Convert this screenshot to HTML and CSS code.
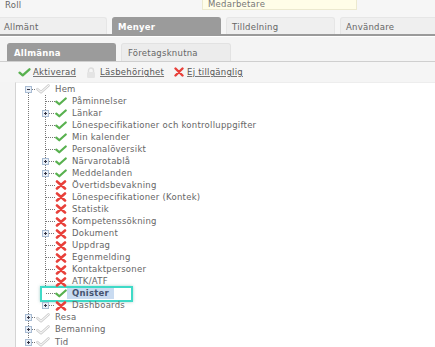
FILE: index.html
```html
<!DOCTYPE html>
<html lang="sv">
<head>
<meta charset="utf-8">
<link rel="stylesheet" href="styles.css">
</head>
<body>
<div class="page">
  <div class="top">
    <span class="lbl">Roll</span>
    <div class="field">Medarbetare</div>
  </div>
  <div class="tabs">
    <div class="tab">Allmänt</div>
    <div class="tab active">Menyer</div>
    <div class="tab">Tilldelning</div>
    <div class="tab">Användare</div>
  </div>
  <div class="panel">
    <div class="subtabs">
      <div class="subtab active">Allmänna</div>
      <div class="subtab">Företagsknutna</div>
    </div>
    <div class="legend">
      <span class="li"><svg class="ic" viewBox="0 0 14 10"><path d="M1.5 5.2 L5 8.2 L12.5 1.5" fill="none" stroke="#58b14f" stroke-width="2.6" stroke-linecap="round" stroke-linejoin="round"/></svg><u>Aktiverad</u></span>
      <span class="li"><svg class="lock" viewBox="0 0 10 11"><path d="M2.5 5 V3.5 a2.5 2.5 0 0 1 5 0 V5" fill="none" stroke="#ddd" stroke-width="1.4"/><rect x="1" y="5" width="8" height="6" rx="1" fill="#e4e4e4"/></svg><u>Läsbehörighet</u></span>
      <span class="li"><svg class="x" viewBox="0 0 10 10"><path d="M1.5 1.5 L8.5 8.5 M8.5 1.5 L1.5 8.5" stroke="#e8403a" stroke-width="2.4" stroke-linecap="round"/></svg><u>Ej tillgänglig</u></span>
    </div>
    <div class="tree">
      <div class="root">
        <div class="row l0"><span class="exp minus"></span><span class="conn0"></span><svg class="gc" viewBox="0 0 14 10"><path d="M1.5 5.2 L5 8.2 L12.5 1.5" fill="none" stroke="#cfcfcf" stroke-width="2.6" stroke-linecap="round" stroke-linejoin="round"/><path d="M1.5 5.2 L5 8.2 L12.5 1.5" fill="none" stroke="#fff" stroke-width="1" stroke-linecap="round" stroke-linejoin="round"/></svg><span class="t">Hem</span></div>
        <div class="kids">
          <div class="row l1"><span class="leaf"></span><svg class="ok" viewBox="0 0 14 10"><path d="M1.5 5.2 L5 8.2 L12.5 1.5" fill="none" stroke="#58b14f" stroke-width="2.6" stroke-linecap="round" stroke-linejoin="round"/></svg><span class="t">Påminnelser</span></div>
          <div class="row l1"><span class="exp plus"></span><span class="conn1"></span><svg class="ok" viewBox="0 0 14 10"><path d="M1.5 5.2 L5 8.2 L12.5 1.5" fill="none" stroke="#58b14f" stroke-width="2.6" stroke-linecap="round" stroke-linejoin="round"/></svg><span class="t">Länkar</span></div>
          <div class="row l1"><span class="leaf"></span><svg class="ok" viewBox="0 0 14 10"><path d="M1.5 5.2 L5 8.2 L12.5 1.5" fill="none" stroke="#58b14f" stroke-width="2.6" stroke-linecap="round" stroke-linejoin="round"/></svg><span class="t">Lönespecifikationer och kontrolluppgifter</span></div>
          <div class="row l1"><span class="leaf"></span><svg class="ok" viewBox="0 0 14 10"><path d="M1.5 5.2 L5 8.2 L12.5 1.5" fill="none" stroke="#58b14f" stroke-width="2.6" stroke-linecap="round" stroke-linejoin="round"/></svg><span class="t">Min kalender</span></div>
          <div class="row l1"><span class="leaf"></span><svg class="ok" viewBox="0 0 14 10"><path d="M1.5 5.2 L5 8.2 L12.5 1.5" fill="none" stroke="#58b14f" stroke-width="2.6" stroke-linecap="round" stroke-linejoin="round"/></svg><span class="t">Personalöversikt</span></div>
          <div class="row l1"><span class="exp plus"></span><span class="conn1"></span><svg class="ok" viewBox="0 0 14 10"><path d="M1.5 5.2 L5 8.2 L12.5 1.5" fill="none" stroke="#58b14f" stroke-width="2.6" stroke-linecap="round" stroke-linejoin="round"/></svg><span class="t">Närvarotablå</span></div>
          <div class="row l1"><span class="exp plus"></span><span class="conn1"></span><svg class="ok" viewBox="0 0 14 10"><path d="M1.5 5.2 L5 8.2 L12.5 1.5" fill="none" stroke="#58b14f" stroke-width="2.6" stroke-linecap="round" stroke-linejoin="round"/></svg><span class="t">Meddelanden</span></div>
          <div class="row l1"><span class="leaf"></span><svg class="no" viewBox="0 0 12 10"><path d="M2 1.5 L10 8.5 M10 1.5 L2 8.5" stroke="#e8403a" stroke-width="2.6" stroke-linecap="round"/></svg><span class="t">Övertidsbevakning</span></div>
          <div class="row l1"><span class="leaf"></span><svg class="no" viewBox="0 0 12 10"><path d="M2 1.5 L10 8.5 M10 1.5 L2 8.5" stroke="#e8403a" stroke-width="2.6" stroke-linecap="round"/></svg><span class="t">Lönespecifikationer (Kontek)</span></div>
          <div class="row l1"><span class="leaf"></span><svg class="no" viewBox="0 0 12 10"><path d="M2 1.5 L10 8.5 M10 1.5 L2 8.5" stroke="#e8403a" stroke-width="2.6" stroke-linecap="round"/></svg><span class="t">Statistik</span></div>
          <div class="row l1"><span class="leaf"></span><svg class="no" viewBox="0 0 12 10"><path d="M2 1.5 L10 8.5 M10 1.5 L2 8.5" stroke="#e8403a" stroke-width="2.6" stroke-linecap="round"/></svg><span class="t">Kompetenssökning</span></div>
          <div class="row l1"><span class="exp plus"></span><span class="conn1"></span><svg class="no" viewBox="0 0 12 10"><path d="M2 1.5 L10 8.5 M10 1.5 L2 8.5" stroke="#e8403a" stroke-width="2.6" stroke-linecap="round"/></svg><span class="t">Dokument</span></div>
          <div class="row l1"><span class="leaf"></span><svg class="no" viewBox="0 0 12 10"><path d="M2 1.5 L10 8.5 M10 1.5 L2 8.5" stroke="#e8403a" stroke-width="2.6" stroke-linecap="round"/></svg><span class="t">Uppdrag</span></div>
          <div class="row l1"><span class="leaf"></span><svg class="no" viewBox="0 0 12 10"><path d="M2 1.5 L10 8.5 M10 1.5 L2 8.5" stroke="#e8403a" stroke-width="2.6" stroke-linecap="round"/></svg><span class="t">Egenmelding</span></div>
          <div class="row l1"><span class="leaf"></span><svg class="no" viewBox="0 0 12 10"><path d="M2 1.5 L10 8.5 M10 1.5 L2 8.5" stroke="#e8403a" stroke-width="2.6" stroke-linecap="round"/></svg><span class="t">Kontaktpersoner</span></div>
          <div class="row l1"><span class="leaf"></span><svg class="no" viewBox="0 0 12 10"><path d="M2 1.5 L10 8.5 M10 1.5 L2 8.5" stroke="#e8403a" stroke-width="2.6" stroke-linecap="round"/></svg><span class="t">ATK/ATF</span></div>
          <div class="row l1 sel"><span class="leaf"></span><svg class="ok" viewBox="0 0 14 10"><path d="M1.5 5.2 L5 8.2 L12.5 1.5" fill="none" stroke="#58b14f" stroke-width="2.6" stroke-linecap="round" stroke-linejoin="round"/></svg><span class="t">Qnister</span></div>
          <div class="row l1"><span class="exp plus"></span><span class="conn1"></span><svg class="no" viewBox="0 0 12 10"><path d="M2 1.5 L10 8.5 M10 1.5 L2 8.5" stroke="#e8403a" stroke-width="2.6" stroke-linecap="round"/></svg><span class="t">Dashboards</span></div>
        </div>
        <div class="row l0"><span class="exp plus"></span><span class="conn0"></span><svg class="gc" viewBox="0 0 14 10"><path d="M1.5 5.2 L5 8.2 L12.5 1.5" fill="none" stroke="#cfcfcf" stroke-width="2.6" stroke-linecap="round" stroke-linejoin="round"/><path d="M1.5 5.2 L5 8.2 L12.5 1.5" fill="none" stroke="#fff" stroke-width="1" stroke-linecap="round" stroke-linejoin="round"/></svg><span class="t">Resa</span></div>
        <div class="row l0"><span class="exp plus"></span><span class="conn0"></span><svg class="gc" viewBox="0 0 14 10"><path d="M1.5 5.2 L5 8.2 L12.5 1.5" fill="none" stroke="#cfcfcf" stroke-width="2.6" stroke-linecap="round" stroke-linejoin="round"/><path d="M1.5 5.2 L5 8.2 L12.5 1.5" fill="none" stroke="#fff" stroke-width="1" stroke-linecap="round" stroke-linejoin="round"/></svg><span class="t">Bemanning</span></div>
        <div class="row l0"><span class="exp plus"></span><span class="conn0"></span><svg class="gc" viewBox="0 0 14 10"><path d="M1.5 5.2 L5 8.2 L12.5 1.5" fill="none" stroke="#cfcfcf" stroke-width="2.6" stroke-linecap="round" stroke-linejoin="round"/><path d="M1.5 5.2 L5 8.2 L12.5 1.5" fill="none" stroke="#fff" stroke-width="1" stroke-linecap="round" stroke-linejoin="round"/></svg><span class="t">Tid</span></div>
      </div>
    </div>
  </div>
</div>
</body>
</html>
```
FILE: styles.css
```css
* { box-sizing: border-box; }
html, body { margin: 0; padding: 0; }
body {
  width: 435px;
  height: 347px;
  overflow: hidden;
  background: #f6f6f6;
  font-family: "DejaVu Sans", Verdana, sans-serif;
  font-size: 8.5px;
  letter-spacing: 0.25px;
  color: #666;
}
.page { display: flex; flex-direction: column; }

.top {
  display: flex;
  align-items: flex-start;
  height: 17px;
  padding-left: 5px;
}
.lbl { margin-top: 0; line-height: 10px; width: 197px; }
.field {
  width: 155px;
  height: 11px;
  margin-top: -1px;
  padding-left: 5px;
  line-height: 10px;
  background: #fffde8;
  border: 1px solid #ece9cf;
  border-top: none;
  color: #777;
}

.tabs {
  display: flex;
  gap: 5px;
  margin-left: -2px;
  height: 19px;
  border-bottom: 2px solid #9a9a9a;
}
.tab {
  width: 109px;
  flex: none;
  height: 17px;
  padding-left: 5px;
  line-height: 18px;
  background: #efefef;
  border: 1px solid #e6e6e6;
  border-bottom: none;
  border-radius: 3px 3px 0 0;
  color: #666;
}
.tab.active {
  background: #9b9b9b;
  border-color: #9b9b9b;
  color: #fff;
  font-weight: bold;
}

.panel {
  background: #f4f4f4;
  border-top: 1px solid #fff;
}
.subtabs {
  display: flex;
  gap: 5px;
  padding: 6px 0 0 7px;
  height: 25px;
  border-bottom: 1px solid #cfcfcf;
}
.subtab {
  width: 110px;
  height: 18px;
  padding-left: 6px;
  line-height: 18px;
  background: #ececec;
  border: 1px solid #e2e2e2;
  border-bottom: none;
  border-radius: 3px 3px 0 0;
  color: #666;
}
.subtab.active {
  width: 109px;
  background: #9b9b9b;
  border-color: #9b9b9b;
  color: #fff;
  font-weight: bold;
}

.legend {
  display: flex;
  align-items: center;
  height: 20px;
  padding-left: 18px;
  gap: 10px;
  background: #f5f5f5;
}
.li { display: flex; align-items: center; gap: 2px; color: #555; }
.li u { text-decoration-color: #777; }
.ic { width: 13px; height: 9px; }
.lock { width: 10px; height: 11px; margin-right: 2px; }
.x { width: 10px; height: 10px; margin-right: 1px; }

.tree {
  margin-left: 15px;
  background: #fff;
  border-left: 1px solid #d4d4d4;
  border-top: 1px solid #ededed;
  height: 266px;
  overflow: hidden;
}
.root {
  background-image: repeating-linear-gradient(to bottom, #777 0 1px, transparent 1px 2px);
  background-repeat: no-repeat;
  background-size: 1px calc(100% - 12px);
  background-position: 12px 6px;
}
.row {
  display: flex;
  align-items: center;
  height: 12.05px;
  white-space: nowrap;
}
.row.l0 { padding-left: 9px; }
.kids {
  background-image: repeating-linear-gradient(to bottom, #777 0 1px, transparent 1px 2px);
  background-repeat: no-repeat;
  background-size: 1px calc(100% - 24px);
  background-position: 29px 0;
}
.row.l1 { padding-left: 26px; }
.exp {
  width: 7px;
  height: 7px;
  flex: none;
  border: 1px solid #a9bcd3;
  background: #e9eff7;
  position: relative;
}
.exp::before {
  content: "";
  position: absolute;
  left: 1px; top: 2px;
  width: 3px; height: 1px;
  background: #334;
}
.exp.plus::after {
  content: "";
  position: absolute;
  left: 2px; top: 1px;
  width: 1px; height: 3px;
  background: #334;
}
.conn0, .conn1, .leaf {
  flex: none;
  height: 1px;
  background-image: repeating-linear-gradient(to right, #777 0 1px, transparent 1px 2px);
}
.conn0 { width: 4px; }
.conn1 { width: 6px; }
.leaf { width: 9px; margin-left: 4px; }
.gc { width: 14px; height: 10px; flex: none; margin-right: 5px; }
.ok { width: 12px; height: 9px; flex: none; margin-right: 5px; }
.no { width: 12px; height: 10px; flex: none; margin-right: 5px; }
.t { color: #666; line-height: 11px; }

.row.sel {
  width: 89px;
  margin-left: 26px;
  padding-left: 0;
  box-shadow: 0 0 0 2px #3fdac7, 0 0 3px 2px rgba(0, 120, 110, 0.35);
}
.row.sel .t {
  background: #c9dbf1;
  color: #45536e;
  font-weight: bold;
  padding: 0 5px 0 5px;
  margin-left: -5px;
}
```
